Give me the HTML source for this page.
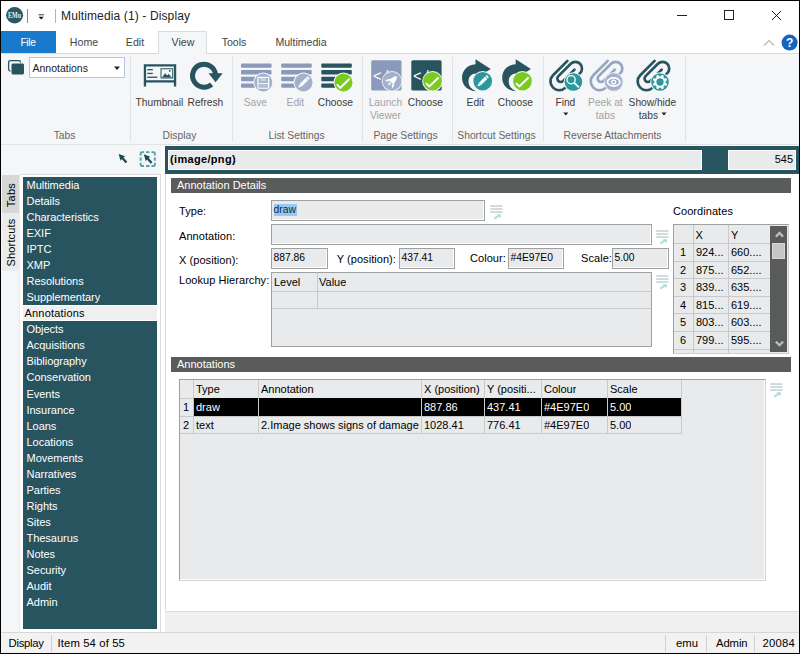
<!DOCTYPE html>
<html><head><meta charset="utf-8"><title>Multimedia (1) - Display</title>
<style>
*{box-sizing:border-box;margin:0;padding:0}
html,body{width:800px;height:654px;overflow:hidden;background:#000}
body{font-family:"Liberation Sans",sans-serif;font-size:11px;color:#000;position:relative}
#win{position:absolute;left:1px;top:1px;width:798px;height:652px;background:#fff;overflow:hidden}
.a{position:absolute;white-space:nowrap}
.tab{top:30px;height:22px;line-height:22px;font-size:10.6px;color:#444;text-align:center}
.sep{top:57px;width:1px;height:85px;background:#e1e2e3}
.gl{font-size:10.3px;color:#666;text-align:center;line-height:14px;letter-spacing:0}
.bl{font-size:10.2px;color:#3c3c3c;text-align:center;line-height:13.6px;letter-spacing:0;padding-top:.5px}
.bl.dis{color:#a3a3a3}
.hf{background:#e9eaeb;border:1px solid #fff;height:20px;top:4px;font-weight:bold;font-size:11px;line-height:17px}
.sh{left:170px;width:620px;height:15px;background:#5a5c5b;color:#fff;font-size:11px;line-height:15px;padding-left:6px}
.lbl{font-size:11px;line-height:14px;color:#000;letter-spacing:.06px}
.fld{background:#e9eaeb;border:1px solid #a0a0a0;box-shadow:inset -1px -1px 0 #fff;font-size:10.3px;line-height:14px;padding:1.500px 0 0 1.500px;height:21px}
.si{color:#fff;font-size:11px;line-height:14px;letter-spacing:-.03px}
.vt{transform:rotate(-90deg);transform-origin:0 0;font-size:11px;line-height:17px;text-align:center;color:#000}
.grid{background:#e9eaeb;border:1px solid #a0a0a0}
.c{font-size:11px;line-height:17px;overflow:hidden}
.vl{width:1px;background:#c9c9c9}
.hl{height:1px;background:#c9c9c9}
.st{top:636px;font-size:11.3px;line-height:14px;color:#000}
.ss{top:634px;width:1px;height:17px;background:#d0d0d0}
</style></head><body>
<div id="win">
<svg class="a" style="left:4px;top:5px" width="20" height="19" viewBox="0 0 20 19"><ellipse cx="9.600" cy="9.200" rx="8.500" ry="8.200" fill="#2a5964"/><text x="9.600" y="11.800" font-family="Liberation Serif,serif" font-size="7.500" font-weight="bold" fill="#e6eef0" text-anchor="middle" textLength="13" lengthAdjust="spacingAndGlyphs">EMu</text></svg>
<div class="a" style="left:26px;top:8px;width:1px;height:14px;background:#8a8a8a"></div>
<svg class="a" style="left:36px;top:12px" width="10" height="10" viewBox="0 0 10 10"><rect x="1.400" y="1.300" width="5.600" height="1" fill="#444"/><path d="M1.600 3.800h5.200L4.200 6.500z" fill="#111"/></svg>
<div class="a" style="left:54px;top:8px;width:1px;height:14px;background:#b5b5b5"></div>
<div class="a" style="left:60px;top:7px;font-size:12px;letter-spacing:.13px;color:#222;line-height:16px">Multimedia (1) - Display</div>
<svg class="a" style="left:660px;top:0" width="138" height="30" viewBox="0 0 138 30"><g stroke="#222" stroke-width="1" fill="none"><path d="M16 14.5h10"/><rect x="63.5" y="9.5" width="9" height="9"/><path d="M111 10l9 9M120 10l-9 9"/></g></svg>
<div class="a" style="left:0px;top:30px;width:798px;height:23px;background:#fff;border-bottom:1px solid #dadbdc"></div>
<div class="a" style="left:0px;top:29.5px;width:55px;height:22.5px;background:#1979ca;color:#fff;text-align:center;line-height:24px;font-size:10.300px;letter-spacing:-.35px;padding-right:1px">File</div>
<div class="a" style="left:157px;top:29.5px;width:49px;height:23.5px;background:#f5f6f7;border:1px solid #dadbdc;border-bottom:none"></div>
<div class="a tab" style="left:68px;top:30px;width:30px;height:22px;">Home</div>
<div class="a tab" style="left:124px;top:30px;width:20px;height:22px;">Edit</div>
<div class="a tab" style="left:170px;top:30px;width:24px;height:22px;">View</div>
<div class="a tab" style="left:219px;top:30px;width:28px;height:22px;">Tools</div>
<div class="a tab" style="left:273px;top:30px;width:54px;height:22px;">Multimedia</div>
<svg class="a" style="left:760px;top:33px" width="38" height="18" viewBox="0 0 38 18"><path d="M3 11.5l5-5 5 5" stroke="#b8b8b8" stroke-width="1.2" fill="none"/><circle cx="28.600" cy="8.600" r="8" fill="#1565c0"/><text x="28.600" y="12.800" font-family="Liberation Sans,sans-serif" font-size="12" font-weight="bold" fill="#fff" text-anchor="middle">?</text></svg>
<div class="a" style="left:0px;top:53px;width:798px;height:91px;background:#f5f6f7;border-bottom:1px solid #e2e3e4"></div>
<div class="a sep" style="left:129px;top:55.5px;width:1px;height:85px;"></div>
<div class="a sep" style="left:231px;top:55.5px;width:1px;height:85px;"></div>
<div class="a sep" style="left:361px;top:55.5px;width:1px;height:85px;"></div>
<div class="a sep" style="left:451px;top:55.5px;width:1px;height:85px;"></div>
<div class="a sep" style="left:541.6px;top:55.5px;width:1px;height:85px;"></div>
<div class="a sep" style="left:684px;top:55.5px;width:1px;height:85px;"></div>
<div class="a gl" style="left:3.5px;top:128px;width:120px;height:14px;">Tabs</div>
<div class="a gl" style="left:118.5px;top:128px;width:120px;height:14px;">Display</div>
<div class="a gl" style="left:235.5px;top:128px;width:120px;height:14px;">List Settings</div>
<div class="a gl" style="left:344.5px;top:128px;width:120px;height:14px;">Page Settings</div>
<div class="a gl" style="left:435.5px;top:128px;width:120px;height:14px;">Shortcut Settings</div>
<div class="a gl" style="left:551.5px;top:128px;width:120px;height:14px;">Reverse Attachments</div>
<div class="a" style="left:28px;top:56.3px;width:96px;height:21px;background:#fff;border:1px solid #b3c7e1;font-size:10.500px;line-height:20.800px;padding-left:2.500px;color:#222">Annotations</div>
<div class="a bl" style="left:118.4px;top:94px;width:80px;height:28px;">Thumbnail</div>
<div class="a bl" style="left:164.4px;top:94px;width:80px;height:28px;">Refresh</div>
<div class="a bl dis" style="left:214.4px;top:94px;width:80px;height:28px;">Save</div>
<div class="a bl dis" style="left:254.4px;top:94px;width:80px;height:28px;">Edit</div>
<div class="a bl" style="left:294.4px;top:94px;width:80px;height:28px;">Choose</div>
<div class="a bl dis" style="left:344.4px;top:94px;width:80px;height:28px;">Launch<br>Viewer</div>
<div class="a bl" style="left:384.4px;top:94px;width:80px;height:28px;">Choose</div>
<div class="a bl" style="left:434.4px;top:94px;width:80px;height:28px;">Edit</div>
<div class="a bl" style="left:474.4px;top:94px;width:80px;height:28px;">Choose</div>
<div class="a bl" style="left:524.4px;top:94px;width:80px;height:28px;">Find</div>
<div class="a bl dis" style="left:564.4px;top:94px;width:80px;height:28px;">Peek at<br>tabs</div>
<div class="a bl" style="left:611.4px;top:94px;width:80px;height:28px;">Show/hide<br>tabs<span style="display:inline-block;width:8px"></span></div>
<svg class="a" style="left:-1px;top:-1px" width="800" height="150" viewBox="0 0 800 150"><rect x="8.6" y="60.6" width="12" height="10.500" rx="1.8" fill="none" stroke="#27545f" stroke-width="1.3"/><rect x="11" y="63" width="13.500" height="12" rx="2" fill="#27545f" stroke="#f5f6f7" stroke-width="1"/><path d="M114 66.500h6l-3 3.500z" fill="#222"/><g fill="#27545f"><path d="M143.800 64.200h32.400v22.300h-2.300v-4h-27.800v4h-2.300zM146.100 66.500v13.700h27.800v-13.700z" fill-rule="evenodd"/><rect x="147.300" y="69" width="5.500" height="1.300"/><rect x="147.300" y="72.800" width="5.500" height="1.300"/><rect x="147.300" y="76.600" width="10" height="1.300"/><path d="M160.500 68.300h12.700v10.200h-12.700zM161.500 69.300v8.200h10.700v-8.200z" fill-rule="evenodd"/><path d="M162 77.500l3.200-4.300 2 2.300 1.500-1.500 3 3.500z"/><circle cx="169.800" cy="70.900" r="0.900"/></g><path d="M211.600 84.400A11.500 11.500 0 1 1 215.500 74.500" fill="none" stroke="#27545f" stroke-width="5"/><path d="M208.500 73.300h14.200l-7.100 8.900z" fill="#27545f"/><rect x="241" y="63.4" width="30.500" height="4.400" rx="1" fill="#8b9abb"/><rect x="241" y="70.1" width="30.500" height="4.400" rx="1" fill="#8b9abb"/><rect x="241" y="76.8" width="30.500" height="4.400" rx="1" fill="#8b9abb"/><rect x="241" y="83.4" width="30.500" height="4.400" rx="1" fill="#8b9abb"/><circle cx="263.3" cy="82.5" r="10" fill="#f5f6f7"/><circle cx="263.3" cy="82.5" r="9" fill="#a3b0cc"/><g transform="translate(263.3 82.5)"><rect x="-5.300" y="-5.200" width="10.600" height="10.800" rx=".8" fill="none" stroke="#fff" stroke-width="1.300"/><rect x="-3" y="-4.600" width="5.800" height="3.400" fill="#c9d1e2"/><rect x="-4.700" y="0.600" width="9.400" height="1.100" fill="#fff"/><rect x="-4.700" y="1.700" width="9.400" height="3.300" fill="#b3bed6"/></g><rect x="281.2" y="63.4" width="30.500" height="4.400" rx="1" fill="#8b9abb"/><rect x="281.2" y="70.1" width="30.500" height="4.400" rx="1" fill="#8b9abb"/><rect x="281.2" y="76.8" width="30.500" height="4.400" rx="1" fill="#8b9abb"/><rect x="281.2" y="83.4" width="30.500" height="4.400" rx="1" fill="#8b9abb"/><circle cx="303.5" cy="82.5" r="10" fill="#f5f6f7"/><circle cx="303.5" cy="82.5" r="9" fill="#a3b0cc"/><g transform="translate(303.5 82.5) rotate(45)" fill="#fff"><rect x="-1.600" y="-7.300" width="3.200" height="1.700"/><rect x="-1.600" y="-5" width="3.200" height="9"/><path d="M-1.600 4.500h3.200l-1.600 2.800z"/></g><rect x="321.3" y="63.4" width="30.500" height="4.400" rx="1" fill="#27545f"/><rect x="321.3" y="70.1" width="30.500" height="4.400" rx="1" fill="#27545f"/><rect x="321.3" y="76.8" width="30.500" height="4.400" rx="1" fill="#27545f"/><rect x="321.3" y="83.4" width="30.500" height="4.400" rx="1" fill="#27545f"/><circle cx="343.5" cy="82.5" r="10" fill="#f5f6f7"/><circle cx="343.5" cy="82.5" r="9" fill="#79cb1f"/><path d="M336.90 84.40l3.400 3.400 9.300-9" fill="none" stroke="#fff" stroke-width="1.900"/><rect x="371.2" y="60.300" width="30.300" height="30.200" rx="1.500" fill="#8b9abb"/><text x="372.90" y="81" font-family="Liberation Sans,sans-serif" font-size="14.500" fill="#fff" letter-spacing="3">&lt;/&gt;</text><circle cx="392" cy="81.2" r="10.3" fill="#e8ecf3"/><circle cx="392" cy="81.2" r="9.3" fill="#a3b0cc"/><g transform="translate(392 81.2) rotate(45)" fill="#fff"><path d="M0 -7c2.200 2 2.800 4.500 2.600 8.500h-5.200c-0.200-4 0.400-6.500 2.600-8.500z"/><path d="M-2.600 -1l-2.400 3.500v2.500l2.400-2zM2.600 -1l2.400 3.500v2.500l-2.400-2z"/><path d="M-1.300 2.500h2.600l-1.300 3.500z"/></g><rect x="411.3" y="60.300" width="30.300" height="30.200" rx="1.500" fill="#27545f"/><text x="413.00" y="81" font-family="Liberation Sans,sans-serif" font-size="14.500" fill="#fff" letter-spacing="3">&lt;/&gt;</text><circle cx="432.5" cy="81.2" r="10.3" fill="#f5f6f7"/><circle cx="432.5" cy="81.2" r="9.3" fill="#79cb1f"/><path d="M425.90 83.10l3.400 3.400 9.300-9" fill="none" stroke="#fff" stroke-width="1.900"/><g transform="translate(462 0)"><path d="M13.500 59.200l15.200 9.800-15.200 9.800v-5.300c-4.500 .3-7 3.500-7 8c0 4 2.500 7.800 8 9.800c-9-.3-14.500-6-14.500-13.500c0-7.500 5.500-13 13.500-13.600z" fill="#27545f"/></g><circle cx="482.7" cy="81.2" r="10.3" fill="#f5f6f7"/><circle cx="482.7" cy="81.2" r="9.3" fill="#2b979c"/><g transform="translate(482.7 81.2) rotate(45)" fill="#fff"><rect x="-1.600" y="-7.300" width="3.200" height="1.700"/><rect x="-1.600" y="-5" width="3.200" height="9"/><path d="M-1.600 4.500h3.200l-1.600 2.800z"/></g><g transform="translate(502.2 0)"><path d="M13.500 59.200l15.200 9.800-15.200 9.800v-5.300c-4.500 .3-7 3.500-7 8c0 4 2.500 7.800 8 9.800c-9-.3-14.500-6-14.500-13.500c0-7.500 5.500-13 13.500-13.600z" fill="#27545f"/></g><circle cx="522.5" cy="81.2" r="10.3" fill="#f5f6f7"/><circle cx="522.5" cy="81.2" r="9.3" fill="#79cb1f"/><path d="M515.90 83.10l3.400 3.400 9.300-9" fill="none" stroke="#fff" stroke-width="1.900"/><g transform="translate(566.1999999999999 76.2) rotate(-45)" fill="none" stroke="#27545f" stroke-width="2.700" stroke-linecap="round"><path d="M11.700 -10L-8.600 -10A8.800 8.800 0 0 0 -8.600 7.600L12 7.600A6.600 6.600 0 0 0 12 -5.600L-5.500 -5.600A3.400 3.400 0 0 0 -5.500 1.200L10.500 1.200"/></g><circle cx="573.4" cy="82" r="9.8" fill="#f5f6f7"/><circle cx="573.4" cy="82" r="8.8" fill="#2b979c"/><circle cx="571.10" cy="79.70" r="4.100" fill="none" stroke="#fff" stroke-width="1.300"/><path d="M574.10 82.70l4.800 4.600" stroke="#fff" stroke-width="1.800"/><g transform="translate(606.5 76.2) rotate(-45)" fill="none" stroke="#97a5c4" stroke-width="2.700" stroke-linecap="round"><path d="M11.700 -10L-8.600 -10A8.800 8.800 0 0 0 -8.600 7.600L12 7.600A6.600 6.600 0 0 0 12 -5.600L-5.500 -5.600A3.400 3.400 0 0 0 -5.500 1.200L10.500 1.200"/></g><circle cx="613.7" cy="82" r="9.8" fill="#e8ecf3"/><circle cx="613.7" cy="82" r="8.8" fill="#a3b0cc"/><ellipse cx="613.7" cy="82" rx="6.200" ry="4.100" fill="none" stroke="#fff" stroke-width="1.600"/><circle cx="613.7" cy="82" r="1.900" fill="none" stroke="#fff" stroke-width="1.300"/><g transform="translate(653.4 76.2) rotate(-45)" fill="none" stroke="#27545f" stroke-width="2.700" stroke-linecap="round"><path d="M11.700 -10L-8.600 -10A8.800 8.800 0 0 0 -8.600 7.600L12 7.600A6.600 6.600 0 0 0 12 -5.600L-5.500 -5.600A3.400 3.400 0 0 0 -5.500 1.200L10.500 1.200"/></g><circle cx="660" cy="82" r="9.8" fill="#f5f6f7"/><circle cx="660" cy="82" r="8.8" fill="#2b979c"/><rect x="-1.250" y="-7.300" width="2.500" height="3" transform="translate(660 82) rotate(22.5)" fill="#fff"/><rect x="-1.250" y="-7.300" width="2.500" height="3" transform="translate(660 82) rotate(67.5)" fill="#fff"/><rect x="-1.250" y="-7.300" width="2.500" height="3" transform="translate(660 82) rotate(112.5)" fill="#fff"/><rect x="-1.250" y="-7.300" width="2.500" height="3" transform="translate(660 82) rotate(157.5)" fill="#fff"/><rect x="-1.250" y="-7.300" width="2.500" height="3" transform="translate(660 82) rotate(202.5)" fill="#fff"/><rect x="-1.250" y="-7.300" width="2.500" height="3" transform="translate(660 82) rotate(247.5)" fill="#fff"/><rect x="-1.250" y="-7.300" width="2.500" height="3" transform="translate(660 82) rotate(292.5)" fill="#fff"/><rect x="-1.250" y="-7.300" width="2.500" height="3" transform="translate(660 82) rotate(337.5)" fill="#fff"/><circle cx="660" cy="82" r="4.700" fill="none" stroke="#fff" stroke-width="2.100"/><path d="M563.300 112.600h5l-2.500 2.800zM661.500 112.600h5l-2.500 2.800z" fill="#222"/></svg>
<div class="a" style="left:0px;top:144px;width:798px;height:487px;background:#f5f6f7"></div>
<div class="a" style="left:159.7px;top:144.5px;width:638.3px;height:486.5px;background:#fff"></div>
<div class="a" style="left:164px;top:611px;width:634px;height:20px;background:#f0f0f0"></div>
<div class="a" style="left:164px;top:144.5px;width:634px;height:28.3px;background:#27545f"></div>
<div class="a hf" style="left:167px;top:149px;width:534px;height:20px;padding-left:1px;letter-spacing:.33px;line-height:16px">(image/png)</div>
<div class="a hf" style="left:727px;top:149px;width:68px;height:20px;text-align:right;padding-right:2px;font-weight:normal;line-height:16px">545</div>
<div class="a" style="left:164px;top:172.8px;width:634px;height:438.5px;background:#fff;border:1px solid #dcdcdc;border-top:none;border-right:none"></div>
<div class="a" style="left:18.3px;top:172.6px;width:141.4px;height:459px;background:#fff;border:1px solid #dcdcdc;border-left-color:#ebebeb"></div>
<div class="a" style="left:21.5px;top:176px;width:134.75px;height:452px;background:#27545f"></div>
<div class="a" style="left:21.5px;top:304px;width:134.75px;height:16.4px;background:#f0f0f0;border-top:1.600px solid #fff;border-bottom:1.400px solid #fff"></div>
<div class="a si" style="left:25.5px;top:177px;">Multimedia</div>
<div class="a si" style="left:25.5px;top:193px;">Details</div>
<div class="a si" style="left:25.5px;top:209px;">Characteristics</div>
<div class="a si" style="left:25.5px;top:225px;">EXIF</div>
<div class="a si" style="left:25.5px;top:241px;">IPTC</div>
<div class="a si" style="left:25.5px;top:257px;">XMP</div>
<div class="a si" style="left:25.5px;top:273px;">Resolutions</div>
<div class="a si" style="left:25.5px;top:289px;">Supplementary</div>
<div class="a si" style="left:23.5px;top:305px;color:#000;letter-spacing:.2px">Annotations</div>
<div class="a si" style="left:25.5px;top:321px;">Objects</div>
<div class="a si" style="left:25.5px;top:337px;">Acquisitions</div>
<div class="a si" style="left:25.5px;top:353px;">Bibliography</div>
<div class="a si" style="left:25.5px;top:369px;">Conservation</div>
<div class="a si" style="left:25.5px;top:386px;">Events</div>
<div class="a si" style="left:25.5px;top:402px;">Insurance</div>
<div class="a si" style="left:25.5px;top:418px;">Loans</div>
<div class="a si" style="left:25.5px;top:434px;">Locations</div>
<div class="a si" style="left:25.5px;top:450px;">Movements</div>
<div class="a si" style="left:25.5px;top:466px;">Narratives</div>
<div class="a si" style="left:25.5px;top:482px;">Parties</div>
<div class="a si" style="left:25.5px;top:498px;">Rights</div>
<div class="a si" style="left:25.5px;top:514px;">Sites</div>
<div class="a si" style="left:25.5px;top:530px;">Thesaurus</div>
<div class="a si" style="left:25.5px;top:546px;">Notes</div>
<div class="a si" style="left:25.5px;top:562px;">Security</div>
<div class="a si" style="left:25.5px;top:578px;">Audit</div>
<div class="a si" style="left:25.5px;top:594px;">Admin</div>
<div class="a" style="left:0.5px;top:174px;width:17.6px;height:37.7px;background:#d7d7d7"></div>
<div class="a" style="left:0.5px;top:212px;width:17.6px;height:57.7px;background:#ececec"></div>
<div class="a vt" style="left:1.800px;top:212.500px;width:38px;letter-spacing:.25px">Tabs</div>
<div class="a vt" style="left:1.800px;top:270px;width:57px;letter-spacing:.15px">Shortcuts</div>
<svg class="a" style="left:-1px;top:-1px" width="170" height="180" viewBox="0 0 170 180"><g transform="translate(0 0)"><path d="M118.600 153.900l6.500 2.400-2.500 1.900-2 2.600z" fill="#1f4a55"/><path d="M122 157.500l4.400 5" stroke="#1f4a55" stroke-width="2.300" fill="none"/></g><path d="M140.65 155.55V153.55Q140.65 152.15 142.05 152.15H144.05M151.45 152.15H153.45Q154.85 152.15 154.85 153.55V155.55M154.85 162.65V164.65Q154.85 166.05 153.45 166.05H151.45M144.05 166.05H142.05Q140.65 166.05 140.65 164.65V162.65M146.05 152.15H149.45M146.05 166.05H149.45M140.65 157.40000000000003V160.8M154.85 157.40000000000003V160.8" fill="none" stroke="#4ea4a8" stroke-width="1.900"/><g transform="translate(25.2 0.4)"><path d="M118.600 153.900l6.500 2.400-2.500 1.900-2 2.600z" fill="#1f4a55"/><path d="M122 157.500l4.400 5" stroke="#1f4a55" stroke-width="2.300" fill="none"/></g></svg>
<div class="a sh" style="left:170px;top:177px;width:620px;height:15px;">Annotation Details</div>
<div class="a sh" style="left:170px;top:356px;width:620px;height:15px;">Annotations</div>
<div class="a lbl" style="left:178px;top:203px;">Type:</div>
<div class="a lbl" style="left:178px;top:227.5px;">Annotation:</div>
<div class="a lbl" style="left:178px;top:251.5px;">X (position):</div>
<div class="a lbl" style="left:335.7px;top:250.7px;">Y (position):</div>
<div class="a lbl" style="left:469px;top:250px;">Colour:</div>
<div class="a lbl" style="left:580px;top:250px;">Scale:</div>
<div class="a lbl" style="left:178px;top:272.3px;">Lookup Hierarchy:</div>
<div class="a lbl" style="left:672px;top:203px;">Coordinates</div>
<div class="a fld" style="left:270px;top:199px;width:214px;height:21px;"><span style="background:#99c9ef;color:#102a44;padding:0 1px 1px 0">draw</span></div>
<div class="a fld" style="left:270px;top:223px;width:381px;height:21px;"></div>
<div class="a fld" style="left:270px;top:247px;width:57px;height:21px;">887.86</div>
<div class="a fld" style="left:398px;top:247px;width:56px;height:21px;">437.41</div>
<div class="a fld" style="left:507px;top:247px;width:56px;height:21px;">#4E97E0</div>
<div class="a fld" style="left:611px;top:247px;width:57px;height:21px;">5.00</div>
<div class="a grid" style="left:270px;top:271px;width:381px;height:75px;"></div>
<div class="a" style="left:271px;top:272px;width:379px;height:18px;background:#e9eaeb"></div>
<div class="a hl" style="left:271px;top:290px;width:379px;height:1px;"></div>
<div class="a hl" style="left:271px;top:307px;width:379px;height:1px;"></div>
<div class="a vl" style="left:316px;top:272px;width:1px;height:36px;"></div>
<div class="a c" style="left:273px;top:273px;">Level</div>
<div class="a c" style="left:318px;top:273px;">Value</div>
<svg class="a" style="left:489px;top:203px" width="14" height="16" viewBox="0 0 14 16"><g fill="#c3d1d2"><rect x="0.200" y="1.300" width="12.300" height="1.500"/><rect x="0.200" y="4.300" width="12.300" height="1.500"/><rect x="0.200" y="7.300" width="12.300" height="1.500"/></g><path d="M4.300 14.600l4.500-3" stroke="#b0dbdc" stroke-width="1.900" fill="none"/><path d="M6.600 10.300h4.200v3.900z" fill="#b0dbdc"/></svg>
<svg class="a" style="left:655.3px;top:228px" width="14" height="16" viewBox="0 0 14 16"><g fill="#c3d1d2"><rect x="0.200" y="1.300" width="12.300" height="1.500"/><rect x="0.200" y="4.300" width="12.300" height="1.500"/><rect x="0.200" y="7.300" width="12.300" height="1.500"/></g><path d="M4.300 14.600l4.500-3" stroke="#b0dbdc" stroke-width="1.900" fill="none"/><path d="M6.600 10.300h4.200v3.900z" fill="#b0dbdc"/></svg>
<svg class="a" style="left:655.3px;top:273px" width="14" height="16" viewBox="0 0 14 16"><g fill="#c3d1d2"><rect x="0.200" y="1.300" width="12.300" height="1.500"/><rect x="0.200" y="4.300" width="12.300" height="1.500"/><rect x="0.200" y="7.300" width="12.300" height="1.500"/></g><path d="M4.300 14.600l4.500-3" stroke="#b0dbdc" stroke-width="1.900" fill="none"/><path d="M6.600 10.300h4.200v3.900z" fill="#b0dbdc"/></svg>
<svg class="a" style="left:769px;top:381px" width="14" height="16" viewBox="0 0 14 16"><g fill="#c3d1d2"><rect x="0.200" y="1.300" width="12.300" height="1.500"/><rect x="0.200" y="4.300" width="12.300" height="1.500"/><rect x="0.200" y="7.300" width="12.300" height="1.500"/></g><path d="M4.300 14.600l4.500-3" stroke="#b0dbdc" stroke-width="1.900" fill="none"/><path d="M6.600 10.300h4.200v3.900z" fill="#b0dbdc"/></svg>
<div class="a grid" style="left:672px;top:223px;width:116px;height:130px;border-right-color:#cfcfcf;border-bottom-color:#cfcfcf"></div>
<div class="a" style="left:769.3px;top:224.8px;width:16.5px;height:126px;background:#595a5a"></div>
<div class="a" style="left:770.9px;top:241.8px;width:13.4px;height:16.4px;background:#c6c6c6;border:1px solid #d6d6d6"></div>
<svg class="a" style="left:773px;top:229px" width="12" height="8" viewBox="0 0 12 8"><path d="M1.900 6.600l3.600-3.600 3.600 3.600" stroke="#bdbdbd" stroke-width="2.300" fill="none"/></svg>
<svg class="a" style="left:773px;top:338px" width="12" height="8" viewBox="0 0 12 8"><path d="M1.900 2.600l3.600 3.600 3.600-3.600" stroke="#bdbdbd" stroke-width="2.300" fill="none"/></svg>
<div class="a hl" style="left:673px;top:242px;width:96px;height:1px;"></div>
<div class="a hl" style="left:673px;top:260px;width:96px;height:1px;"></div>
<div class="a hl" style="left:673px;top:277px;width:96px;height:1px;"></div>
<div class="a hl" style="left:673px;top:295px;width:96px;height:1px;"></div>
<div class="a hl" style="left:673px;top:312px;width:96px;height:1px;"></div>
<div class="a hl" style="left:673px;top:330px;width:96px;height:1px;"></div>
<div class="a hl" style="left:673px;top:348px;width:96px;height:1px;"></div>
<div class="a vl" style="left:692px;top:224px;width:1px;height:128px;"></div>
<div class="a vl" style="left:727px;top:224px;width:1px;height:128px;"></div>
<div class="a c" style="left:694.5px;top:226px;">X</div>
<div class="a c" style="left:730px;top:226px;">Y</div>
<div class="a c" style="left:679px;top:243px;">1</div>
<div class="a c" style="left:695px;top:243px;">924...</div>
<div class="a c" style="left:730px;top:243px;">660....</div>
<div class="a c" style="left:679px;top:261px;">2</div>
<div class="a c" style="left:695px;top:261px;">875...</div>
<div class="a c" style="left:730px;top:261px;">652....</div>
<div class="a c" style="left:679px;top:278px;">3</div>
<div class="a c" style="left:695px;top:278px;">839...</div>
<div class="a c" style="left:730px;top:278px;">635....</div>
<div class="a c" style="left:679px;top:296px;">4</div>
<div class="a c" style="left:695px;top:296px;">815...</div>
<div class="a c" style="left:730px;top:296px;">619....</div>
<div class="a c" style="left:679px;top:313px;">5</div>
<div class="a c" style="left:695px;top:313px;">803...</div>
<div class="a c" style="left:730px;top:313px;">603....</div>
<div class="a c" style="left:679px;top:331px;">6</div>
<div class="a c" style="left:695px;top:331px;">799...</div>
<div class="a c" style="left:730px;top:331px;">595....</div>
<div class="a grid" style="left:178px;top:378px;width:587px;height:201.5px;border-right-color:#d4d4d4;border-bottom-color:#d4d4d4;box-shadow:inset -1px -1px 0 #fff"></div>
<div class="a hl" style="left:179px;top:397px;width:501px;height:1px;"></div>
<div class="a hl" style="left:179px;top:415px;width:501px;height:1px;"></div>
<div class="a hl" style="left:179px;top:432px;width:501px;height:1px;"></div>
<div class="a" style="left:192px;top:397px;width:488px;height:18px;background:#000"></div>
<div class="a vl" style="left:192px;top:379px;width:1px;height:54px;"></div>
<div class="a vl" style="left:257px;top:379px;width:1px;height:54px;"></div>
<div class="a vl" style="left:420px;top:379px;width:1px;height:54px;"></div>
<div class="a vl" style="left:483px;top:379px;width:1px;height:54px;"></div>
<div class="a vl" style="left:540px;top:379px;width:1px;height:54px;"></div>
<div class="a vl" style="left:606px;top:379px;width:1px;height:54px;"></div>
<div class="a vl" style="left:680px;top:379px;width:1px;height:54px;"></div>
<div class="a c" style="left:195px;top:380px;">Type</div>
<div class="a c" style="left:260px;top:380px;">Annotation</div>
<div class="a c" style="left:423px;top:380px;">X (position)</div>
<div class="a c" style="left:486px;top:380px;">Y (positi...</div>
<div class="a c" style="left:543px;top:380px;">Colour</div>
<div class="a c" style="left:609px;top:380px;">Scale</div>
<div class="a c" style="left:182px;top:398px;">1</div>
<div class="a c" style="left:195px;top:398px;color:#fff">draw</div>
<div class="a c" style="left:423px;top:398px;color:#fff">887.86</div>
<div class="a c" style="left:486px;top:398px;color:#fff">437.41</div>
<div class="a c" style="left:543px;top:398px;color:#fff">#4E97E0</div>
<div class="a c" style="left:609px;top:398px;color:#fff">5.00</div>
<div class="a c" style="left:182px;top:416px;">2</div>
<div class="a c" style="left:195px;top:416px;">text</div>
<div class="a c" style="left:260px;top:416px;">2.Image shows signs of damage</div>
<div class="a c" style="left:423px;top:416px;">1028.41</div>
<div class="a c" style="left:486px;top:416px;">776.41</div>
<div class="a c" style="left:543px;top:416px;">#4E97E0</div>
<div class="a c" style="left:609px;top:416px;">5.00</div>
<div class="a" style="left:0px;top:631px;width:798px;height:21px;background:#f2f2f2;border-top:1px solid #d7d7d7"></div>
<div class="a st" style="left:7.6px;top:635px;top:635px;letter-spacing:-0.3px">Display</div>
<div class="a st" style="left:56.5px;top:635px;top:635px;letter-spacing:0.12px">Item 54 of 55</div>
<div class="a st" style="left:675px;top:635px;top:635px;letter-spacing:0px">emu</div>
<div class="a st" style="left:715px;top:635px;top:635px;letter-spacing:-0.1px">Admin</div>
<div class="a st" style="left:761.5px;top:635px;top:635px;letter-spacing:0.2px">20084</div>
<div class="a ss" style="left:50px;top:634px;width:1px;height:17px;top:634px"></div>
<div class="a ss" style="left:664px;top:634px;width:1px;height:17px;top:634px"></div>
<div class="a ss" style="left:705px;top:634px;width:1px;height:17px;top:634px"></div>
<div class="a ss" style="left:753px;top:634px;width:1px;height:17px;top:634px"></div>
</div>
</body></html>
